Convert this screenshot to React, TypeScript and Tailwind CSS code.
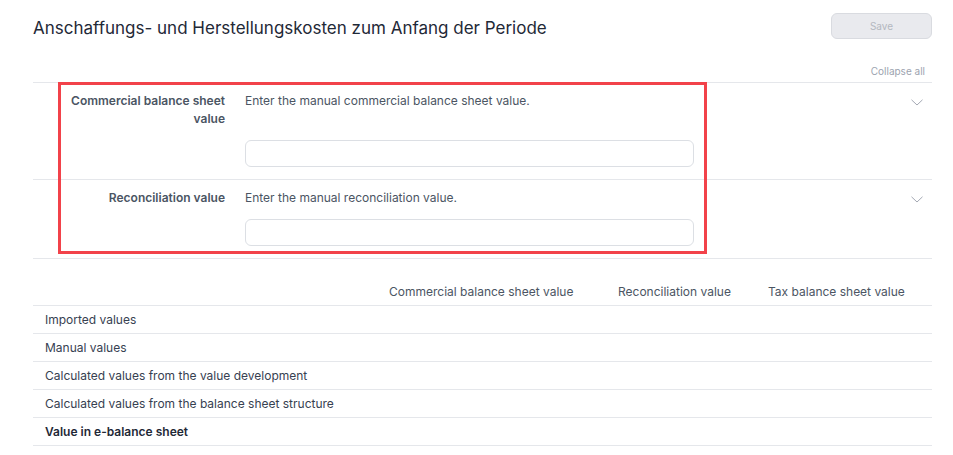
import React from "react";

function Chevron() {
  return (
    <svg width="12" height="7" viewBox="0 0 12 7" fill="none" className="block">
      <path d="M0.5 0.8 L6 6 L11.5 0.8" stroke="#a3a8b3" strokeWidth="1" />
    </svg>
  );
}

function EditRow({ label, desc }: { label: string; desc: string }) {
  return (
    <div className="flex border-b border-[#e5e7eb] pt-[9px] pb-3">
      <div className="grid grid-cols-[192px_449px] gap-x-5 gap-y-3">
        <div className="pl-6 text-right text-[12px] leading-[18px] font-semibold text-[#4b5563]">{label}</div>
        <div className="text-[12px] leading-[18px] text-[#4b5563]">{desc}</div>
        <div />
        <input className="h-[27px] w-full rounded-md border border-[#dcdfe4] bg-white outline-none" />
      </div>
      <div className="flex flex-1 justify-end pr-[9px] pt-[7px]">
        <Chevron />
      </div>
    </div>
  );
}

export default function App() {
  const rows = [
    "Imported values",
    "Manual values",
    "Calculated values from the value development",
    "Calculated values from the balance sheet structure",
  ];
  return (
    <div className="min-h-screen bg-white pl-[33px] pr-[21px] pt-[13px] font-['Inter',sans-serif]">
      <div className="flex items-start justify-between">
        <h1 className="pt-[2px] text-[17px] leading-[26px] font-normal text-[#1f2937]">
          Anschaffungs- und Herstellungskosten zum Anfang der Periode
        </h1>
        <button className="h-[26px] w-[101px] rounded-md border border-[#d9dbe0] bg-[#e9eaee] text-[10px] text-[#b4b8c0]">
          Save
        </button>
      </div>
      <div className="flex justify-end pr-[7px] pt-[23px] pb-[3px]">
        <span className="text-[10px] leading-[15px] text-[#9ca3af]">Collapse all</span>
      </div>
      <div className="relative border-t border-[#e5e7eb]">
        <EditRow label="Commercial balance sheet value" desc="Enter the manual commercial balance sheet value." />
        <EditRow label="Reconciliation value" desc="Enter the manual reconciliation value." />
        <div className="pointer-events-none absolute left-[25px] top-[-1px] h-[172px] w-[649px] border-[3px] border-[#f2424a]" />
      </div>
      <div className="mt-[19px] text-[12px]">
        <div className="grid h-[28px] grid-cols-[344px_229px_150px_1fr] items-center border-b border-[#e5e7eb] text-[#4b5563]">
          <div />
          <div className="pl-3">Commercial balance sheet value</div>
          <div className="pl-3">Reconciliation value</div>
          <div className="pl-3">Tax balance sheet value</div>
        </div>
        {rows.map((r) => (
          <div key={r} className="grid h-[28px] grid-cols-[344px_229px_150px_1fr] items-center border-b border-[#e5e7eb] text-[#374151]">
            <div className="pl-3">{r}</div>
            <div />
            <div />
            <div />
          </div>
        ))}
        <div className="grid h-[28px] grid-cols-[344px_229px_150px_1fr] items-center border-b border-[#e5e7eb] font-semibold text-[#1f2937]">
          <div className="pl-3">Value in e-balance sheet</div>
          <div />
          <div />
          <div />
        </div>
      </div>
    </div>
  );
}
